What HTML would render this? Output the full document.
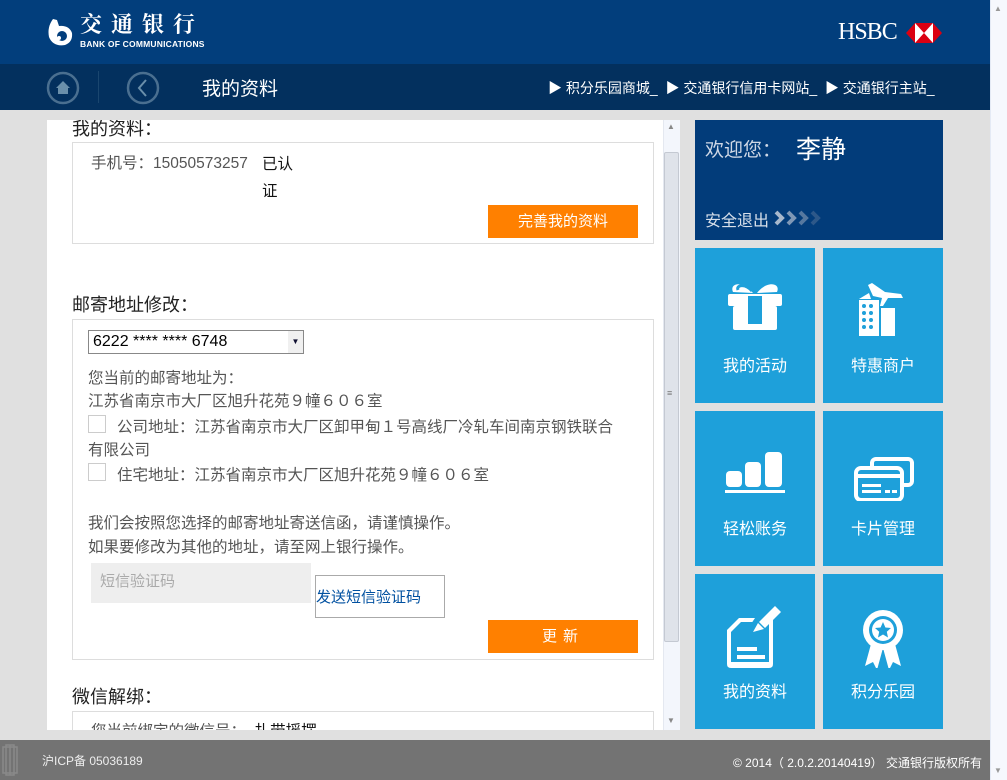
<!DOCTYPE html>
<html><head><meta charset="utf-8"><style>
*{margin:0;padding:0;box-sizing:border-box}
body{width:1007px;height:780px;overflow:hidden;background:#e0e0e0;font-family:"Liberation Sans","Noto Sans CJK SC",sans-serif;position:relative}
.a{position:absolute}
.hd{left:0;top:0;width:990px;height:64px;background:#023e7c}
.nav{left:0;top:64px;width:990px;height:46px;background:#03305e}
.wsb{left:990px;top:0;width:17px;height:780px;background:#f6f8fd;border-left:1px solid #e4eaf5}
.panel{left:47px;top:120px;width:633px;height:610px;background:#fff;overflow:hidden}
.box{border:1px solid #ddd;background:#fff}
.h{font-size:18px;color:#222}
.t{font-size:15.5px;color:#555;white-space:nowrap}
.btn{background:#ff8000;color:#fff;font-size:15px;text-align:center}
.tile{background:#1ea0da;width:120px;height:155px;color:#fff;font-size:16px;text-align:center}
.tile span{position:absolute;left:0;width:120px;top:104px}
.tile svg{position:absolute;left:30px;top:30px}
.cb{width:18px;height:18px;border:1px solid #ccc;background:#fff}
</style></head><body>
<div class="a hd"></div>
<svg class="a" style="left:45px;top:16px" width="30" height="32" viewBox="0 0 30 30"><path d="M8 2 Q2 10 4 20 Q8 30 20 28 Q28 25 27 16 Q24 8 14 9 L12 3 Z" fill="#fff"/><circle cx="17" cy="19" r="5" fill="#023e7c"/><circle cx="14" cy="21" r="2" fill="#fff"/></svg>
<div class="a" style="left:80px;top:11px;color:#fff;font-size:22px;line-height:26px;font-weight:bold;letter-spacing:9px;font-family:'Noto Serif CJK SC',serif">交通银行</div>
<div class="a" style="left:80px;top:39px;color:#fff;font-size:8.5px;font-weight:bold;letter-spacing:0.2px">BANK OF COMMUNICATIONS</div>
<div class="a" style="left:838px;top:19px;color:#fff;font-size:24px;font-family:'Liberation Serif',serif;letter-spacing:-1px">HSBC</div>
<svg class="a" style="left:906px;top:23px" width="36" height="20" viewBox="0 0 36 20"><polygon points="0,10 9,0 27,0 36,10 27,20 9,20" fill="#db0011"/><polygon points="9,0 18,10 9,20" fill="#fff"/><polygon points="27,0 18,10 27,20" fill="#fff"/></svg>
<div class="a nav"></div>
<svg class="a" style="left:46px;top:71px" width="34" height="34"><circle cx="17" cy="17" r="15" fill="none" stroke="#4a6f90" stroke-width="2.5"/><path d="M10 17 L17 10 L24 17 L22 17 L22 23 L12 23 L12 17 Z" fill="#6a8faa"/></svg>
<div class="a" style="left:98px;top:71px;width:1px;height:32px;background:#1a466f"></div>
<svg class="a" style="left:126px;top:71px" width="34" height="34"><circle cx="17" cy="17" r="15" fill="none" stroke="#4a6f90" stroke-width="2.5"/><path d="M20 9 L13 17 L20 25" fill="none" stroke="#6a8faa" stroke-width="2"/></svg>
<div class="a" style="left:202px;top:74px;color:#fff;font-size:19px">我的资料</div>
<div class="a" style="left:548px;top:78px;color:#fff;font-size:14px;white-space:nowrap">▶ 积分乐园商城_&nbsp;&nbsp;▶ 交通银行信用卡网站_&nbsp;&nbsp;▶ 交通银行主站_</div>
<div class="a wsb"></div>
<div class="a" style="left:994px;top:4px;font-size:8px;color:#999">▲</div>
<div class="a" style="left:994px;top:766px;font-size:8px;color:#999">▼</div>

<div class="a panel">
 <div class="a h" style="left:25px;top:-5px">我的资料：</div>
 <div class="a box" style="left:25px;top:22px;width:582px;height:102px"></div>
 <div class="a t" style="left:44px;top:31px">手机号：15050573257</div>
 <div class="a" style="left:215px;top:31px;font-size:15.5px;color:#111;line-height:27px">已认<br>证</div>
 <div class="a btn" style="left:441px;top:85px;width:150px;height:33px;line-height:33px">完善我的资料</div>
 <div class="a h" style="left:25px;top:171px">邮寄地址修改：</div>
 <div class="a box" style="left:25px;top:199px;width:582px;height:341px"></div>
 <div class="a" style="left:41px;top:210px;width:216px;height:24px;border:1px solid #888;font-size:16px;line-height:22px;padding-left:4px;color:#000">6222 **** **** 6748<span style="position:absolute;right:0;top:0;width:15px;height:22px;background:#f0f0f0;font-size:8px;text-align:center;color:#113">▼</span></div>
 <div class="a t" style="left:41px;top:246px">您当前的邮寄地址为：</div>
 <div class="a t" style="left:41px;top:269px">江苏省南京市大厂区旭升花苑９幢６０６室</div>
 <div class="a cb" style="left:41px;top:295px"></div>
 <div class="a t" style="left:70px;top:295px">公司地址：江苏省南京市大厂区卸甲甸１号高线厂冷轧车间南京钢铁联合</div>
 <div class="a t" style="left:41px;top:318px">有限公司</div>
 <div class="a cb" style="left:41px;top:343px"></div>
 <div class="a t" style="left:70px;top:343px">住宅地址：江苏省南京市大厂区旭升花苑９幢６０６室</div>
 <div class="a t" style="left:41px;top:391px">我们会按照您选择的邮寄地址寄送信函，请谨慎操作。</div>
 <div class="a t" style="left:41px;top:415px">如果要修改为其他的地址，请至网上银行操作。</div>
 <div class="a" style="left:44px;top:443px;width:220px;height:40px;background:#eee;color:#aaa;font-size:15px;line-height:38px;padding-left:9px">短信验证码</div>
 <div class="a" style="left:268px;top:455px;width:130px;height:43px;border:1px solid #aaa;color:#0050a0;font-size:15px;padding-top:10px">发送短信验证码</div>
 <div class="a btn" style="left:441px;top:500px;width:150px;height:33px;line-height:33px;letter-spacing:6px">更新</div>
 <div class="a h" style="left:25px;top:563px">微信解绑：</div>
 <div class="a box" style="left:25px;top:591px;width:582px;height:40px"></div>
 <div class="a t" style="left:44px;top:599px">您当前绑定的微信号：&nbsp;&nbsp;<span style="color:#111">扎带摇摆</span></div>
 <div class="a" style="left:616px;top:0;width:17px;height:610px;background:#f3f6fc;border-left:1px solid #e4e8f0"></div>
 <div class="a" style="left:617px;top:32px;width:15px;height:490px;background:#dfe3ea;border:1px solid #c4c9d2;border-radius:2px"></div>
 <div class="a" style="left:620px;top:2px;font-size:8px;color:#888">▲</div>
 <div class="a" style="left:620px;top:596px;font-size:8px;color:#888">▼</div>
 <div class="a" style="left:620px;top:268px;font-size:9px;color:#777">≡</div>
</div>

<div class="a" style="left:695px;top:120px;width:248px;height:120px;background:#023c7a"></div>
<div class="a" style="left:705px;top:135px;color:#cfd8e6;font-size:19px">欢迎您：</div>
<div class="a" style="left:796px;top:130px;color:#fff;font-size:25px">李静</div>
<div class="a" style="left:705px;top:207px;color:#d8e0ea;font-size:16px">安全退出</div>
<svg class="a" style="left:774px;top:210px" width="54" height="16"><g fill="none" stroke-width="4"><path d="M2 2 L8 8 L2 14" stroke="#a7b8cc"/><path d="M14 2 L20 8 L14 14" stroke="#7f98b6"/><path d="M26 2 L32 8 L26 14" stroke="#56789f"/><path d="M38 2 L44 8 L38 14" stroke="#2d5889"/></g></svg>

<div class="a tile" style="left:695px;top:248px"><svg width="60" height="60" viewBox="0 0 60 60"><g fill="#fff"><path d="M28 15 C18 2 4 5 8 14 L28 15 Z" /><path d="M32 15 C42 2 56 5 52 14 L32 15 Z"/><rect x="3" y="16" width="54" height="12" rx="2"/><rect x="8" y="28" width="44" height="24" rx="2"/></g><rect x="23" y="18" width="14" height="28" fill="#1ea0da"/><path d="M27 13 C20 5 11 7 13 12" stroke="#1ea0da" stroke-width="3" fill="none"/></svg><span>我的活动</span></div>
<div class="a tile" style="left:823px;top:248px"><svg width="60" height="60" viewBox="0 0 60 60"><g fill="#fff"><rect x="6" y="22" width="20" height="36"/><rect x="28" y="30" width="14" height="28"/><path d="M15 7 L19 5 L32 14 L48 16 L50 20 L35 20 L30 28 L27 28 L29 20 L20 18 Z"/><polygon points="6,21 16,15 18,21"/></g><g fill="#1ea0da"><circle cx="11" cy="28" r="2"/><circle cx="18" cy="28" r="2"/><circle cx="11" cy="35" r="2"/><circle cx="18" cy="35" r="2"/><circle cx="11" cy="42" r="2"/><circle cx="18" cy="42" r="2"/><circle cx="11" cy="49" r="2"/><circle cx="18" cy="49" r="2"/></g></svg><span>特惠商户</span></div>
<div class="a tile" style="left:695px;top:411px"><svg width="60" height="60" viewBox="0 0 60 60"><g fill="#fff"><rect x="1" y="30" width="16" height="16" rx="4"/><rect x="20" y="21" width="16" height="25" rx="4"/><rect x="40" y="11" width="17" height="35" rx="4"/><rect x="0" y="49" width="60" height="3"/></g></svg><span>轻松账务</span></div>
<div class="a tile" style="left:823px;top:411px"><svg width="64" height="60" viewBox="0 0 64 60"><g fill="none" stroke="#fff" stroke-width="4"><rect x="19" y="18" width="40" height="26" rx="4"/><rect x="3" y="27" width="46" height="32" rx="5" fill="#1ea0da"/></g><g fill="#fff"><rect x="3" y="33" width="46" height="4"/><rect x="9" y="43" width="19" height="3"/><rect x="9" y="49" width="19" height="3"/><rect x="32" y="49" width="5" height="3"/><rect x="39" y="49" width="5" height="3"/></g></svg><span>卡片管理</span></div>
<div class="a tile" style="left:695px;top:574px"><svg width="60" height="64" viewBox="0 0 60 64"><g fill="#fff"><path d="M14 14 L30 14 L22 26 L34 22 L48 8 L48 60 Q48 64 44 64 L6 64 Q2 64 2 60 L2 26 Z"/></g><path d="M6 28 L16 18 L28 18 L44 14 L44 58 L6 58 Z" fill="#1ea0da"/><g fill="#fff"><rect x="12" y="43" width="20" height="4"/><rect x="12" y="51" width="28" height="4"/><path d="M34 18 L50 2 L56 8 L40 24 Z"/><path d="M33 19 L39 25 L28 28 Z"/></g></svg><span>我的资料</span></div>
<div class="a tile" style="left:823px;top:574px"><svg width="60" height="64" viewBox="0 0 60 64"><g fill="#fff"><circle cx="30" cy="26" r="20"/><path d="M18 40 L12 62 L20 58 L24 66 L30 44 Z"/><path d="M42 40 L48 62 L40 58 L36 66 L30 44 Z"/></g><circle cx="30" cy="26" r="14" fill="#1ea0da"/><circle cx="30" cy="26" r="11" fill="#fff"/><polygon fill="#1ea0da" points="30,18 32.4,23.5 38,24 33.8,27.8 35,33.5 30,30.5 25,33.5 26.2,27.8 22,24 27.6,23.5"/></svg><span>积分乐园</span></div>

<div class="a" style="left:0;top:740px;width:990px;height:40px;background:#737373"></div>
<svg class="a" style="left:2px;top:744px" width="16" height="32"><g fill="none" stroke="#8a8a8a" stroke-width="1.5"><rect x="1" y="3" width="14" height="26"/><rect x="4" y="1" width="8" height="30"/><line x1="8" y1="1" x2="8" y2="31"/></g></svg>
<div class="a" style="left:42px;top:752px;color:#eee;font-size:12px">沪ICP备 05036189</div>
<div class="a" style="left:733px;top:754px;color:#fff;font-size:12px;white-space:nowrap">© 2014（ 2.0.2.20140419） 交通银行版权所有</div>
</body></html>
